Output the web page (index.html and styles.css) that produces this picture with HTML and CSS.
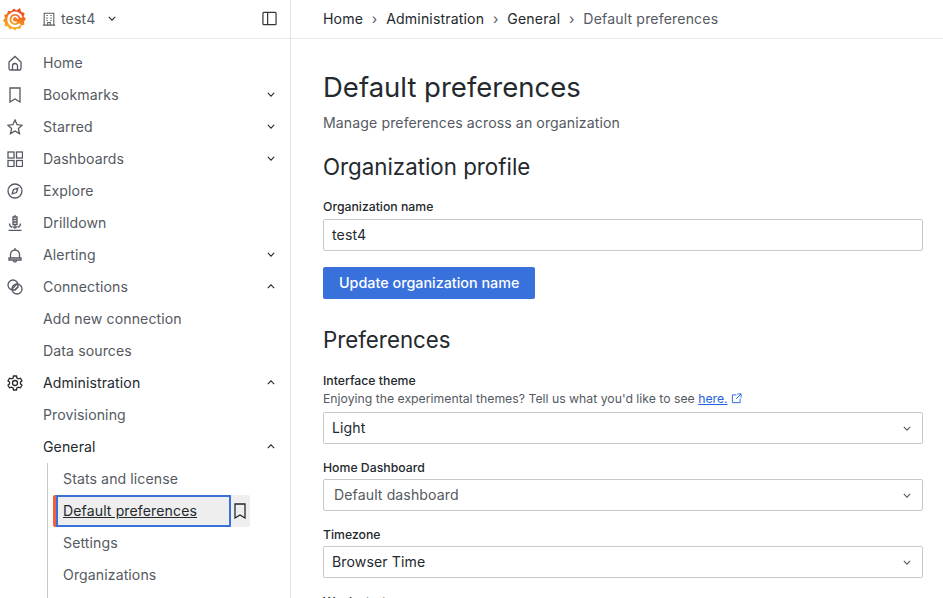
FILE: index.html

```html
<!DOCTYPE html>
<html lang="en">
<head>
    <meta charset="UTF-8">
    <title>Default preferences</title>
    <link rel="stylesheet" href="styles.css">
</head>
<body>
    <aside class="sidebar">
        <div class="side-top">
            <svg class="logo" width="24" height="24" viewBox="0 0 24 24">
                <defs>
                    <linearGradient id="logo-grad" x1="0" y1="1" x2="0.300" y2="0">
                        <stop offset="0" stop-color="#fcc41a"/>
                        <stop offset="0.500" stop-color="#f58a1f"/>
                        <stop offset="1" stop-color="#ee4a26"/>
                    </linearGradient>
                </defs>
                <path fill="url(#logo-grad)" d="M11 1.500l2.500 2 3.500-2.500 1 3.700 3.600 1.300-.8 3.500L23 12l-1.900 2.300.3 3.400-3.100.8-1.100 3.300-3.400-.4L12 23.500l-2.500-1.900-3 1-1.500-3-3.300-.5.200-3.400L0 13.500l2-2.400-.8-3 2.900-1.200.9-3.200 3 .5z"/>
                <path fill="none" stroke="#fff" stroke-width="2.400" d="M18.500 10.500A6.700 6.700 0 1 0 17 17"/>
                <path fill="none" stroke="#fff" stroke-width="1.600" d="M15 12a3 3 0 1 0-1.500 3"/>
            </svg>
            <svg class="icon org-icon" viewBox="0 0 16 16"><path d="M2.500 15V1.500h11V15M1 15h14M6.500 15v-3h3v3M5 4h1.500M9.500 4H11M5 7h1.500M9.500 7H11M5 9.700h1.500M9.500 9.700H11"/></svg>
            <span class="org-name">test4</span>
            <svg class="chev org-chev" viewBox="0 0 10 6"><path d="M1 1l4 4 4-4"/></svg>
            <svg class="icon dock-icon" viewBox="0 0 16 16"><rect x="1" y="1.500" width="14" height="13" rx="1"/><path d="M6 1.500v13"/></svg>
        </div>
        <nav class="nav">
            <a class="nav-item"><svg class="icon" viewBox="0 0 16 16"><path d="M2 7l6-5.500L14 7v6.500a1.500 1.500 0 0 1-1.500 1.500h-9A1.500 1.500 0 0 1 2 13.500zM5.500 15v-4a2.500 2.500 0 0 1 5 0v4"/></svg>Home</a>
            <a class="nav-item"><svg class="icon" viewBox="0 0 16 16"><path d="M3 1h10v14l-5-3-5 3z"/></svg>Bookmarks<svg class="chev" viewBox="0 0 10 6"><path d="M1 1l4 4 4-4"/></svg></a>
            <a class="nav-item"><svg class="icon" viewBox="0 0 16 16"><path d="M8 1l2.100 4.700 5.100.5-3.800 3.400 1.100 5L8 12l-4.500 2.600 1.100-5L.8 6.200l5.100-.5z"/></svg>Starred<svg class="chev" viewBox="0 0 10 6"><path d="M1 1l4 4 4-4"/></svg></a>
            <a class="nav-item"><svg class="icon" viewBox="0 0 16 16"><rect x="1" y="1" width="6" height="6"/><rect x="9.500" y="1" width="6" height="6"/><rect x="1" y="9.500" width="6" height="6"/><rect x="9.500" y="9.500" width="6" height="6"/></svg>Dashboards<svg class="chev" viewBox="0 0 10 6"><path d="M1 1l4 4 4-4"/></svg></a>
            <a class="nav-item"><svg class="icon" viewBox="0 0 16 16"><circle cx="8" cy="8" r="7"/><path d="M10.800 5.200L9.500 9.500l-4.300 1.300 1.300-4.300z"/></svg>Explore</a>
            <a class="nav-item"><svg class="icon" viewBox="0 0 16 16"><path d="M1.500 15.300h13M8 0v1.500M6 2h4v7.500H6zM6 4.500h4M6 7h4M8 9.500V13M5.500 11.500L8 13l2.500-1.500M2.500 8.500c0 2 1 3.200 2.500 3.800M13.500 8.500c0 2-1 3.200-2.500 3.800"/></svg>Drilldown</a>
            <a class="nav-item"><svg class="icon" viewBox="0 0 16 16"><path d="M8 1v1.500M3.500 11V7.500a4.500 4.500 0 0 1 9 0V11M2 11h12v2H2zM6.500 13.500a1.500 1.500 0 0 0 3 0"/></svg>Alerting<svg class="chev" viewBox="0 0 10 6"><path d="M1 1l4 4 4-4"/></svg></a>
            <a class="nav-item"><svg class="icon" viewBox="0 0 16 16"><circle cx="6" cy="6" r="5"/><circle cx="10" cy="10" r="5"/><path d="M5 10l5-5M7.500 11.500l4-4"/></svg>Connections<svg class="chev" viewBox="0 0 10 6"><path d="M1 5l4-4 4 4"/></svg></a>
            <a class="nav-item sub">Add new connection</a>
            <a class="nav-item sub">Data sources</a>
            <a class="nav-item open"><svg class="icon" viewBox="0 0 16 16"><circle cx="8" cy="8" r="2.500"/><path d="M6.500 1h3l.4 2 1.600.9 2-.7 1.500 2.600-1.500 1.300v1.800l1.500 1.300-1.500 2.600-2-.7-1.600.9-.4 2h-3l-.4-2-1.600-.9-2 .7L1 10.200l1.500-1.300V7.100L1 5.800l1.500-2.600 2 .7 1.600-.9z"/></svg>Administration<svg class="chev" viewBox="0 0 10 6"><path d="M1 5l4-4 4 4"/></svg></a>
            <a class="nav-item sub">Provisioning</a>
            <a class="nav-item sub open">General<svg class="chev" viewBox="0 0 10 6"><path d="M1 5l4-4 4 4"/></svg></a>
            <div class="sub-tree">
                <a class="tree-item">Stats and license</a>
                <div class="tree-active">
                    <a class="tree-link">Default preferences</a>
                    <svg class="icon mark-icon" viewBox="0 0 16 16"><path d="M3 1h10v14l-5-3-5 3z"/></svg>
                </div>
                <a class="tree-item">Settings</a>
                <a class="tree-item">Organizations</a>
            </div>
        </nav>
    </aside>

    <div class="main">
        <div class="crumbs">
            <span>Home</span><i>›</i>
            <span>Administration</span><i>›</i>
            <span>General</span><i>›</i>
            <span class="crumb-last">Default preferences</span>
        </div>
        <div class="content">
            <h1>Default preferences</h1>
            <p class="subtitle">Manage preferences across an organization</p>

            <h2>Organization profile</h2>
            <label class="field-label org-label">Organization name</label>
            <div class="input">test4</div>
            <button class="primary">Update organization name</button>

            <h2 class="pref-title">Preferences</h2>
            <label class="field-label tight">Interface theme</label>
            <p class="hint">Enjoying the experimental themes? Tell us what you'd like to see <a>here.</a>
                <svg class="ext-icon" viewBox="0 0 12 12"><path d="M6 2H1.500v8.500H10V6M7 1h4v4M11 1L5.500 6.500"/></svg>
            </p>
            <div class="input select">Light<svg class="chev" viewBox="0 0 10 6"><path d="M1 1l4 4 4-4"/></svg></div>
            <label class="field-label">Home Dashboard</label>
            <div class="input select placeholder">Default dashboard<svg class="chev" viewBox="0 0 10 6"><path d="M1 1l4 4 4-4"/></svg></div>
            <label class="field-label">Timezone</label>
            <div class="input select">Browser Time<svg class="chev" viewBox="0 0 10 6"><path d="M1 1l4 4 4-4"/></svg></div>
            <label class="field-label">Week start</label>
        </div>
    </div>
</body>
</html>
```

FILE: styles.css

```css
html, body {
    height: 100%;
}
body {
    margin: 0;
    display: flex;
    height: 598px;
    overflow: hidden;
    background: #fff;
    color: #24292e;
    font-family: Inter, "Noto Sans", sans-serif;
    font-size: 14.100px;
}
.icon {
    width: 16px;
    height: 16px;
    fill: none;
    stroke: #555a62;
    stroke-width: 1.300;
    flex-shrink: 0;
}
.chev {
    width: 8px;
    height: 5px;
    fill: none;
    stroke: #24292e;
    stroke-width: 1.400;
    flex-shrink: 0;
}

.sidebar {
    width: 290px;
    flex-shrink: 0;
    border-right: 1px solid #e4e5e6;
    overflow: hidden;
}
.side-top {
    display: flex;
    align-items: center;
    box-sizing: content-box;
    height: 37px;
    padding: 0 13px 1px 3px;
    border-bottom: 1px solid #e9eaeb;
}
.logo {
    margin-right: 15px;
}
.org-icon {
    stroke-width: 1.200;
    width: 14px;
    height: 14px;
    margin-right: 5px;
}
.org-name {
    color: #555a62;
    letter-spacing: 0.15px;
}
.org-chev {
    margin-left: 13px;
}
.dock-icon {
    margin-left: auto;
    width: 15px;
    height: 15px;
    stroke: #33373d;
}
.nav {
    padding-top: 8px;
}
.nav-item {
    display: flex;
    align-items: center;
    box-sizing: border-box;
    height: 32px;
    padding: 0 15px 1px 7px;
    color: #555a62;
    letter-spacing: 0.1px;
}
.nav-item .icon {
    margin-right: 20px;
}
.nav-item .chev {
    margin-left: auto;
}
.nav-item.sub {
    padding-left: 43px;
}
.nav-item.open {
    color: #24292e;
}
.nav-item.open .icon {
    stroke: #24292e;
}
.sub-tree {
    margin-left: 47px;
    border-left: 1px solid #c9cacc;
    padding-bottom: 40px;
}
.tree-item {
    display: flex;
    align-items: center;
    box-sizing: border-box;
    height: 32px;
    padding: 0 0 1px 15px;
    color: #555a62;
    letter-spacing: 0.1px;
}
.tree-active {
    display: flex;
    align-items: center;
    width: 197px;
    height: 32px;
    margin-left: 5px;
    border-radius: 2px;
    background: #eeeeef;
    border-left: 3px solid #f0603a;
    box-sizing: border-box;
}
.tree-link {
    display: flex;
    align-items: center;
    box-sizing: border-box;
    width: 175px;
    height: 32px;
    padding: 0 0 1px 5px;
    border: 2px solid #3871dc;
    color: #24292e;
    letter-spacing: 0.1px;
    text-decoration: underline;
}
.mark-icon {
    margin-left: 1px;
    stroke: #24292e;
    stroke-width: 1.300;
}

.main {
    flex: 1;
    min-width: 0;
}
.crumbs {
    display: flex;
    align-items: center;
    gap: 8px;
    height: 37px;
    padding: 0 0 1px 32px;
    border-bottom: 1px solid #e9eaeb;
    letter-spacing: 0.15px;
}
.crumbs i {
    font-style: normal;
    color: #555a62;
    margin: 0 0.750px;
}
.crumb-last {
    color: #555a62;
}
.content {
    padding: 30px 20px 0 32px;
}
h1 {
    margin: 0;
    font-size: 27.500px;
    line-height: 36px;
    font-weight: 400;
}
.subtitle {
    margin: 7px 0 0;
    line-height: 22px;
    color: #555a62;
    letter-spacing: 0.1px;
}
h2 {
    margin: 16px 0 0;
    font-size: 22.300px;
    line-height: 33px;
    font-weight: 400;
}
.field-label {
    display: block;
    margin-top: 15px;
    line-height: 18px;
    font-size: 12.250px;
    font-weight: 500;
    margin-bottom: 2px;
}
.field-label.org-label {
    margin-bottom: 3px;
}
.field-label.tight {
    margin-bottom: 0;
    margin-top: 16px;
}
.input {
    display: flex;
    align-items: center;
    box-sizing: border-box;
    height: 32px;
    padding: 0 8px 2px;
    border: 1px solid #c8c9cb;
    border-radius: 2px;
    letter-spacing: 0.1px;
}
.select {
    justify-content: space-between;
    padding-right: 11px;
}
.select .chev {
    stroke: #555a62;
    margin-top: 2px;
}
.placeholder {
    color: #555a62;
    padding-left: 10px;
}
.primary {
    display: block;
    height: 32px;
    margin-top: 16px;
    padding: 0 16px 2px;
    border: none;
    border-radius: 2px;
    background: #3871dc;
    color: #fff;
    font-family: inherit;
    font-size: 14.350px;
    font-weight: 500;
}
.pref-title {
    margin-top: 24px;
}
.hint {
    margin: 0 0 4px;
    font-size: 12.250px;
    line-height: 18px;
    color: #555a62;
}
.hint a {
    color: #1f62e0;
    text-decoration: underline;
}
.ext-icon {
    width: 11px;
    height: 11px;
    vertical-align: -1px;
    fill: none;
    stroke: #1f62e0;
    stroke-width: 1;
}
```
